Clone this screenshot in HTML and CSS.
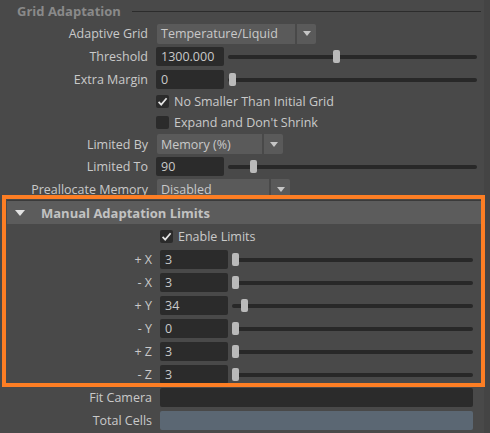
FILE: index.html
```html
<!DOCTYPE html>
<html>
<head>
<meta charset="utf-8">
<link rel="stylesheet" href="styles.css">
</head>
<body>
<div class="window">
  <div class="main">
    <div class="title-row"><span class="title">Grid Adaptation</span><span class="rule"></span></div>

    <div class="form">
      <div class="row h23">
        <span class="lbl">Adaptive Grid</span>
        <div class="dd"><span class="dd-main w138">Temperature/Liquid</span><span class="dd-btn"><i class="arrow"></i></span></div>
      </div>
      <div class="row h23">
        <span class="lbl">Threshold</span>
        <span class="field">1300.000</span>
        <div class="slider"><span class="thumb" style="left:105px"></span></div>
      </div>
      <div class="row h23">
        <span class="lbl">Extra Margin</span>
        <span class="field">0</span>
        <div class="slider"><span class="thumb" style="left:1px"></span></div>
      </div>
      <div class="row h21">
        <span class="lbl"></span>
        <span class="cb"><svg width="13" height="13" viewBox="0 0 13 13"><polyline points="2.6,6.8 5.2,9.6 10.6,3.2" fill="none" stroke="#e4e4e4" stroke-width="1.7"/></svg></span>
        <span class="cb-text">No Smaller Than Initial Grid</span>
      </div>
      <div class="row h21">
        <span class="lbl"></span>
        <span class="cb"></span>
        <span class="cb-text">Expand and Don't Shrink</span>
      </div>
      <div class="row h22">
        <span class="lbl">Limited By</span>
        <div class="dd"><span class="dd-main w105">Memory (%)</span><span class="dd-btn"><i class="arrow"></i></span></div>
      </div>
      <div class="row h23">
        <span class="lbl">Limited To</span>
        <span class="field">90</span>
        <div class="slider"><span class="thumb" style="left:22px"></span></div>
      </div>
      <div class="row h22">
        <span class="lbl">Preallocate Memory</span>
        <div class="dd"><span class="dd-main w112">Disabled</span><span class="dd-btn"><i class="arrow"></i></span></div>
      </div>
    </div>

    <div class="section">
      <div class="section-head"><i class="tri"></i>Manual Adaptation Limits</div>
      <div class="form sec">
        <div class="row h24">
          <span class="lbl"></span>
          <span class="cb"><svg width="13" height="13" viewBox="0 0 13 13"><polyline points="2.6,6.8 5.2,9.6 10.6,3.2" fill="none" stroke="#e4e4e4" stroke-width="1.7"/></svg></span>
          <span class="cb-text">Enable Limits</span>
        </div>
        <div class="row h23"><span class="lbl">+ X</span><span class="field">3</span><div class="slider"><span class="thumb" style="left:0px"></span></div></div>
        <div class="row h23"><span class="lbl">- X</span><span class="field">3</span><div class="slider"><span class="thumb" style="left:0px"></span></div></div>
        <div class="row h23"><span class="lbl">+ Y</span><span class="field">34</span><div class="slider"><span class="thumb" style="left:9px"></span></div></div>
        <div class="row h23"><span class="lbl">- Y</span><span class="field">0</span><div class="slider"><span class="thumb" style="left:0px"></span></div></div>
        <div class="row h23"><span class="lbl">+ Z</span><span class="field">3</span><div class="slider"><span class="thumb" style="left:0px"></span></div></div>
        <div class="row h23"><span class="lbl">- Z</span><span class="field">3</span><div class="slider"><span class="thumb" style="left:0px"></span></div></div>
      </div>
    </div>

    <div class="form sec bottom">
      <div class="row h23"><span class="lbl">Fit Camera</span><span class="wide-field"></span></div>
      <div class="row h23"><span class="lbl">Total Cells</span><span class="wide-field total"></span></div>
    </div>
  </div>
  <div class="scroll"></div>
  <div class="highlight"></div>
</div>
</body>
</html>
```

FILE: styles.css
```css
* { box-sizing: border-box; }

body {
  margin: 0;
  background: #464646;
  font-family: "Open Sans", "DejaVu Sans", sans-serif;
  font-size: 12.5px;
  color: #c9c9c9;
}

.window {
  position: relative;
  display: flex;
  width: 490px;
  height: 433px;
  overflow: hidden;
}

.main {
  width: 484px;
  background: #494949;
}

.scroll {
  flex: 1;
  background: #444444;
}

.title-row {
  height: 22px;
  display: flex;
  align-items: center;
  gap: 11px;
  padding-left: 17px;
  padding-right: 3px;
}

.title {
  font-weight: bold;
  font-size: 13px;
  color: #8a8a8a;
}

.rule {
  flex: 1;
  height: 1px;
  background: #2c2c2c;
}

.form {
  padding-right: 7px;
}

.row {
  display: flex;
  align-items: center;
}

.h21 { height: 21px; }
.h22 { height: 22px; }
.h23 { height: 23px; }
.h24 { height: 24px; }

.lbl {
  width: 148px;
  margin-right: 8px;
  text-align: right;
  white-space: nowrap;
  flex: none;
}

.field {
  width: 68px;
  height: 19px;
  flex: none;
  background: #2b2b2b;
  border-radius: 2px;
  padding-left: 5px;
  display: flex;
  align-items: center;
}

.slider {
  flex: 1;
  position: relative;
  height: 13px;
  margin-left: 4px;
}

.slider::before {
  content: "";
  position: absolute;
  left: 0;
  right: 0;
  top: 5px;
  height: 4px;
  border-radius: 2px;
  background: #282828;
}

.thumb {
  position: absolute;
  top: 0;
  width: 7px;
  height: 13px;
  border-radius: 2px;
  background: #bababa;
}

.dd {
  display: flex;
  gap: 2px;
  height: 20px;
  margin-left: 1px;
}

.dd-main {
  background: #5a5a5a;
  border-radius: 2px 0 0 2px;
  padding-left: 4px;
  display: flex;
  align-items: center;
}

.w138 { width: 138px; }
.w105 { width: 105px; }
.w112 { width: 112px; }

.dd-btn {
  width: 19px;
  background: #5a5a5a;
  border-radius: 0 2px 2px 0;
  display: flex;
  align-items: center;
  justify-content: center;
}

.arrow {
  width: 0;
  height: 0;
  border-left: 4px solid transparent;
  border-right: 4px solid transparent;
  border-top: 5px solid #c6c6c6;
}

.cb {
  width: 13px;
  height: 13px;
  flex: none;
  background: #2b2b2b;
  border-radius: 2px;
  margin-right: 5px;
  display: flex;
}

.section {
  margin-left: 7px;
  width: 474px;
  border-top: 1px solid #3a3a3a;
}

.section-head {
  height: 23px;
  background: #5c5c5c;
  display: flex;
  align-items: center;
  padding-left: 8px;
  font-weight: bold;
  font-size: 13px;
  color: #c2c2c2;
}

.tri {
  width: 0;
  height: 0;
  border-left: 5.5px solid transparent;
  border-right: 5.5px solid transparent;
  border-top: 6px solid #e2e2e2;
  margin-right: 16px;
}

.sec .lbl {
  width: 145px;
}

.sec {
  padding-right: 8px;
}

.bottom {
  margin-left: 7px;
  width: 474px;
}

.wide-field {
  flex: 1;
  height: 19px;
  background: #2b2b2b;
  border-radius: 2px;
}

.wide-field.total {
  background: #5b6773;
}

.highlight {
  position: absolute;
  left: 2px;
  top: 195px;
  width: 483px;
  height: 192px;
  border: 4px solid #fd7e24;
}
```
